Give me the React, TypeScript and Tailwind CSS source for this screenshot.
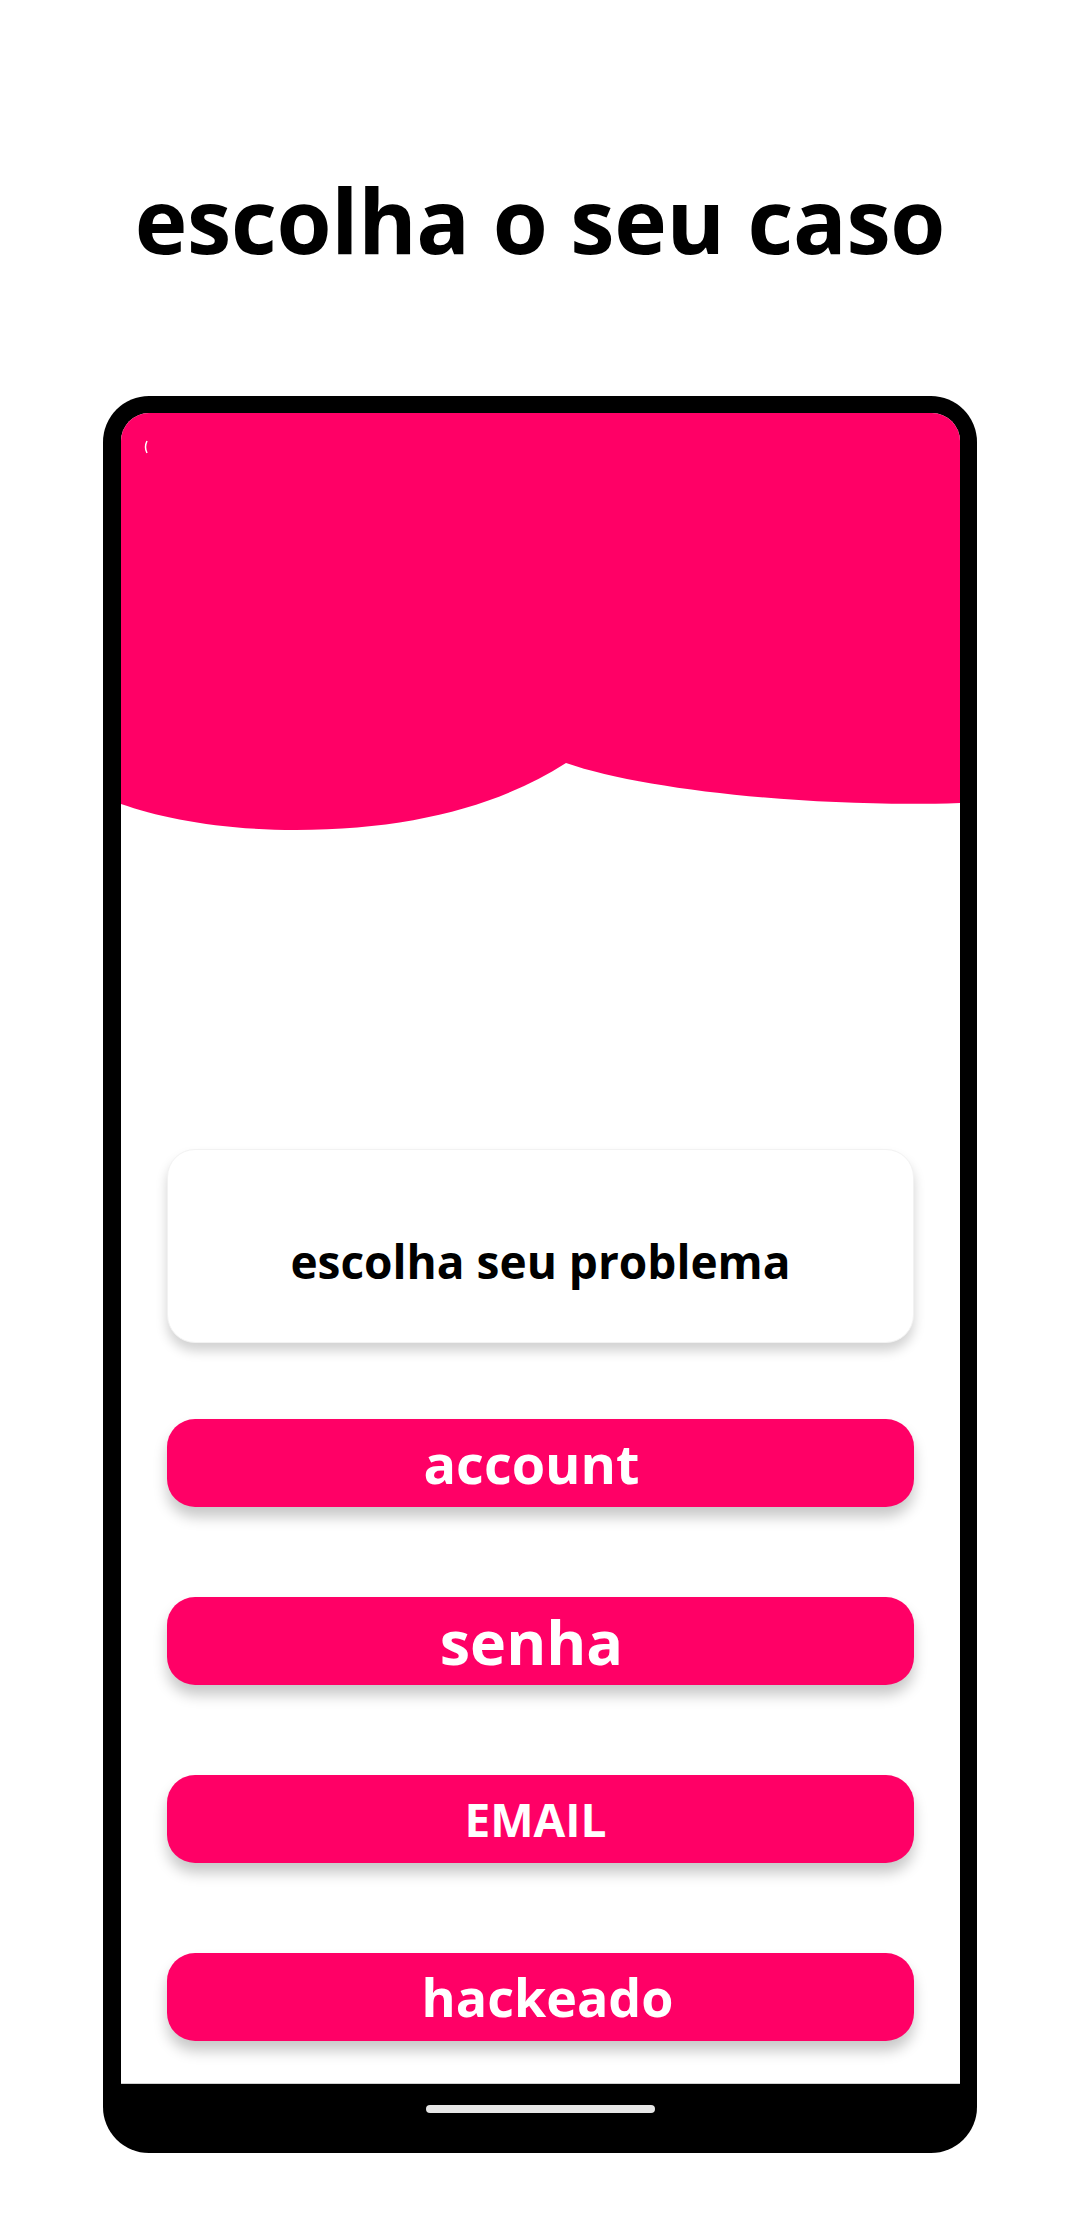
import React from 'react';

const font = { fontFamily: '"Open Sans", "Noto Sans", sans-serif' };

function Wave() {
  return (
    <svg width="839" height="418" viewBox="0 0 839 418" className="block shrink-0">
      <path
        d="M0 0 H839 V390 C700 395 525 378 445 350 C380 392 290 417 175 417 C100 417 40 405 0 391 Z"
        fill="#ff0066"
      />
      <path d="M26 28 C24 32 24 36 26 40" stroke="#ffffff" strokeWidth="1.5" fill="none" />
    </svg>
  );
}

function PinkButton({ label, size, shift }: { label: string; size: string; shift: string }) {
  return (
    <div className="h-[88px] w-full rounded-[28px] bg-[#ff0066] flex items-center justify-center shadow-[0_10px_14px_rgba(0,0,0,0.22)]">
      <span className={`font-bold text-white leading-none ${size} ${shift}`}>{label}</span>
    </div>
  );
}

export default function App() {
  return (
    <div className="w-[1080px] h-[2220px] bg-white flex flex-col items-center" style={font}>
      <h1 className="mt-[158px] text-[89px] leading-[124px] font-bold text-black tracking-[-0.3px]">
        escolha o seu caso
      </h1>

      {/* Phone */}
      <div className="mt-[114px] w-[874px] h-[1757px] bg-black rounded-[46px] pt-[17px] pl-[18px] pr-[17px] flex flex-col">
        <div className="w-[839px] h-[1671px] bg-white rounded-t-[28px] overflow-hidden flex flex-col border-b border-[#d0d0d0]">
          <Wave />

          <div className="px-[46px] mt-[318px] flex flex-col">
            <div className="h-[194px] rounded-[28px] bg-white flex items-center justify-center pt-[30px] shadow-[0_8px_12px_rgba(0,0,0,0.18)] border border-[#f2f2f2]">
              <span className="text-[46px] font-bold text-black leading-none">escolha seu problema</span>
            </div>

            <div className="mt-[76px] flex flex-col gap-[90px]">
              <PinkButton label="account" size="text-[54px]" shift="pr-[18px]" />
              <PinkButton label="senha" size="text-[61px]" shift="pr-[18px]" />
              <PinkButton label="EMAIL" size="text-[46px]" shift="pr-[10px]" />
              <PinkButton label="hackeado" size="text-[52px]" shift="pl-[14px]" />
            </div>
          </div>
        </div>

        <div className="h-[69px] flex justify-center">
          <div className="mt-[21px] w-[229px] h-[8px] rounded-full bg-[#e6e6e6]" />
        </div>
      </div>
    </div>
  );
}
